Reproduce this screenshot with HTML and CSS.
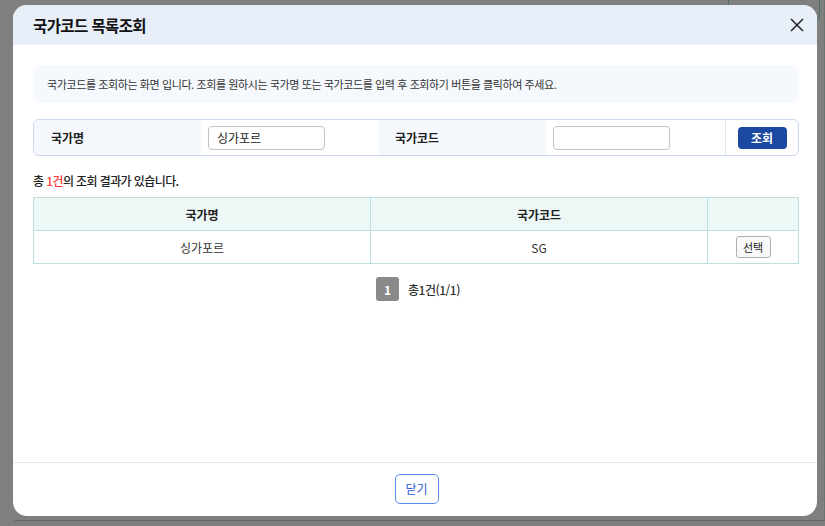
FILE: index.html
```html
<!DOCTYPE html>
<html lang="ko">
<head>
<meta charset="utf-8">
<link rel="stylesheet" href="styles.css">
</head>
<body>
<div class="backdrop-page">
  <div class="bg-box"></div>
</div>
<div class="modal">
  <div class="modal-header">
    <h1 class="modal-title">국가코드 목록조회</h1>
    <button class="close-btn" aria-label="닫기">
      <svg width="14" height="14" viewBox="0 0 14 14"><path d="M1 1L13 13M13 1L1 13" stroke="#222" stroke-width="1.5" fill="none"/></svg>
    </button>
  </div>
  <div class="modal-body">
    <div class="info-box">국가코드를 조회하는 화면 입니다. 조회를 원하시는 국가명 또는 국가코드를 입력 후 조회하기 버튼을 클릭하여 주세요.</div>
    <div class="search-box">
      <div class="search-label">국가명</div>
      <div class="search-field"><input class="text-input" type="text" value="싱가포르"></div>
      <div class="search-label">국가코드</div>
      <div class="search-field"><input class="text-input" type="text" value=""></div>
      <div class="search-action"><button class="search-btn">조회</button></div>
    </div>
    <p class="result-count">총 <span class="count-em">1건</span>의 조회 결과가 있습니다.</p>
    <table class="result-table">
      <colgroup><col class="col-name"><col class="col-code"><col class="col-sel"></colgroup>
      <thead>
        <tr><th>국가명</th><th>국가코드</th><th></th></tr>
      </thead>
      <tbody>
        <tr><td>싱가포르</td><td>SG</td><td><button class="select-btn">선택</button></td></tr>
      </tbody>
    </table>
    <div class="pagination">
      <span class="page-num">1</span>
      <span class="page-info">총1건(1/1)</span>
    </div>
  </div>
  <div class="modal-footer">
    <button class="footer-btn">닫기</button>
  </div>
</div>
</body>
</html>
```
FILE: styles.css
```css
* { box-sizing: border-box; }
html, body { margin: 0; padding: 0; }
body {
  width: 825px;
  height: 526px;
  background: #7f7f7f;
  font-family: "Noto Sans CJK KR", "Noto Sans", sans-serif;
  color: #222;
  overflow: hidden;
  position: relative;
}
.backdrop-page {
  position: absolute;
  left: 14px;
  top: 0;
  width: 811px;
  height: 521px;
  border-bottom: 1px solid #5f6a6a;
  border-right: 1px solid #6a7272;
}
.bg-box {
  position: absolute;
  left: 714px;
  top: -4px;
  width: 92px;
  height: 24px;
  border: 1px solid #4f6a6c;
  border-radius: 3px;
}
.modal {
  position: relative;
  margin: 5px 0 0 13px;
  width: 804px;
  height: 511px;
  background: #fff;
  border-radius: 14px;
  display: flex;
  flex-direction: column;
  overflow: hidden;
}
.modal-header {
  height: 40px;
  background: #e7eef8;
  display: flex;
  align-items: center;
  justify-content: space-between;
  padding: 0 13px 0 20px;
}
.modal-title {
  margin: 0;
  font-size: 15.5px;
  font-weight: 700;
  color: #111;
  letter-spacing: -0.6px;
}
.close-btn {
  border: 0;
  background: none;
  padding: 0;
  width: 14px;
  height: 14px;
  display: flex;
}
.modal-body {
  flex: 1;
  padding: 20px 18px 0 20px;
}
.info-box {
  height: 38px;
  background: #f5f8fd;
  border-radius: 8px;
  display: flex;
  align-items: center;
  padding-left: 14px;
  font-size: 11px;
  letter-spacing: -0.4px;
  color: #333;
}
.search-box {
  margin-top: 16px;
  height: 37px;
  border: 1px solid #c8d6ee;
  border-radius: 6px;
  display: grid;
  grid-template-columns: 167px 177px 168px 179px 1fr;
  overflow: hidden;
}
.search-label {
  background: #f5f8fd;
  display: flex;
  align-items: center;
  padding-left: 17px;
  font-size: 12px;
  font-weight: 700;
  color: #222;
}
.search-field {
  display: flex;
  align-items: center;
  padding-left: 7px;
}
.text-input {
  width: 117px;
  height: 24px;
  border: 1px solid #bfc3c8;
  border-radius: 4px;
  padding: 0 8px;
  font-family: inherit;
  font-size: 12px;
  color: #222;
  outline: none;
}
.search-action {
  border-left: 1px solid #e2e8f0;
  display: flex;
  align-items: center;
  justify-content: center;
}
.search-btn {
  width: 49px;
  height: 22px;
  border: 0;
  border-radius: 4px;
  background: #1b48a0;
  color: #fff;
  font-family: inherit;
  font-size: 12px;
  font-weight: 700;
  padding: 0;
}
.result-count {
  margin: 17px 0 0 0;
  height: 24px;
  font-size: 12px;
  font-weight: 500;
  letter-spacing: -0.6px;
  color: #222;
  line-height: 16px;
}
.count-em { color: #ff3b3b; }
.result-table {
  width: 766px;
  border-collapse: collapse;
  table-layout: fixed;
  font-size: 12px;
}
.col-name { width: 337px; }
.col-code { width: 337px; }
.result-table th, .result-table td {
  border: 1px solid #bcdfe2;
  height: 33px;
  text-align: center;
  padding: 0;
}
.result-table th {
  background: #edf7f6;
  font-weight: 700;
  color: #222;
}
.result-table td { color: #333; }
.select-btn {
  width: 35px;
  height: 22px;
  border: 1px solid #b0b0b0;
  border-radius: 3px;
  background: #f9f9f9;
  font-family: inherit;
  font-size: 11px;
  color: #222;
  padding: 0;
}
.pagination {
  margin-top: 13px;
  display: flex;
  justify-content: center;
  align-items: center;
  gap: 9px;
  padding-left: 4px;
}
.page-num {
  width: 23px;
  height: 24px;
  background: #8a8a8a;
  border-radius: 3px;
  color: #fff;
  font-size: 12px;
  font-weight: 700;
  display: flex;
  align-items: center;
  justify-content: center;
}
.page-info {
  font-size: 12px;
  font-weight: 500;
  letter-spacing: -0.5px;
  color: #333;
}
.modal-footer {
  height: 54px;
  border-top: 1px solid #e3ebf5;
  display: flex;
  align-items: center;
  justify-content: center;
  padding-left: 3px;
  padding-bottom: 2px;
}
.footer-btn {
  width: 44px;
  height: 30px;
  border: 1px solid #5a8cf0;
  border-radius: 5px;
  background: #fff;
  color: #2a5bd7;
  font-family: inherit;
  font-size: 12px;
  padding: 0;
}
```
